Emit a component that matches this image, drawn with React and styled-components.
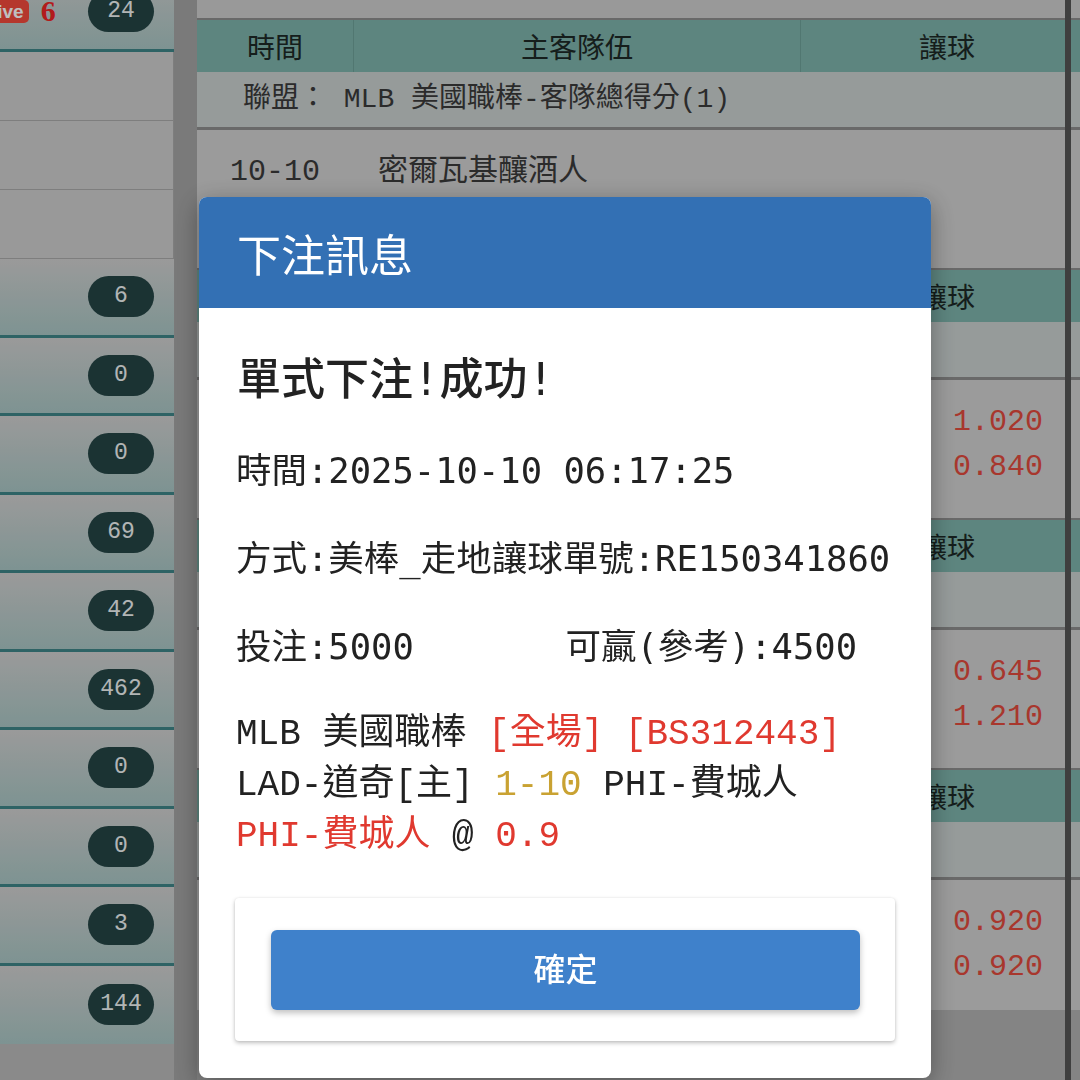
import React from "react";
import styled, { createGlobalStyle } from "styled-components";

const GlobalStyle = createGlobalStyle`
  html, body { margin: 0; padding: 0; }
  body {
    width: 1080px;
    height: 1080px;
    overflow: hidden;
    background: #a3a3a3;
    font-family: "Noto Sans CJK TC", "Noto Sans", sans-serif;
  }
`;

const Page = styled.div`
  display: flex;
  align-items: stretch;
  width: 1080px;
  height: 1080px;
  overflow: hidden;
  background: #a3a3a3;
`;

/* ---------- sidebar ---------- */
const Sidebar = styled.aside`
  flex: 0 0 174px;
  margin-top: -27px;
  background: #b8b8b8;
  display: flex;
  flex-direction: column;
`;

const TealRow = styled.div`
  box-sizing: border-box;
  height: ${(p) => p.$height}px;
  display: flex;
  align-items: center;
  padding-right: 20px;
  background: linear-gradient(#cecece, #a8c5c3);
  border-bottom: 3px solid #3e8487;
  &:last-child { border-bottom: none; }
`;

const PlainRow = styled.div`
  box-sizing: border-box;
  height: 69px;
  background: #cccccc;
  border-bottom: 1px solid #a8a8a8;
  border-right: 1px solid #a8a8a8;
`;

const LiveBadge = styled.span`
  margin-left: -13px;
  height: 23px;
  padding: 0 5px;
  border-radius: 5px;
  background: #f24a3c;
  color: #fff;
  font: 700 19px/23px "Liberation Sans", sans-serif;
`;

const LiveCount = styled.span`
  margin-left: 12px;
  color: #ee2424;
  font: 700 30px/1 "Liberation Serif", serif;
`;

const Count = styled.span`
  margin-left: auto;
  display: inline-flex;
  align-items: center;
  justify-content: center;
  width: 66px;
  height: 41px;
  border-radius: 21px;
  background: #244445;
  color: #eef2f2;
  font: 23px/1 "Liberation Mono", monospace;
`;

/* ---------- main table ---------- */
const Main = styled.main`
  position: relative;
  flex: 0 0 1000px;
  margin-left: 23px;
  background: #b0b0b0;
  display: flex;
  flex-direction: column;
`;

const TopStrip = styled.div`
  height: 18px;
  background: #cdcdcd;
`;

const HeadRow = styled.div`
  display: grid;
  grid-template-columns: 156px 447px 265px 1fr;
  height: 52px;
  border-top: 2px solid #8d8d8d;
  background: #7db2aa;
`;

const HeadCell = styled.div`
  display: flex;
  align-items: center;
  justify-content: center;
  padding-left: ${(p) => p.$shift || 0}px;
  font-size: 28px;
  color: #1c2826;
  & + & { border-left: 1px solid #6d9f97; }
`;

const LeagueRow = styled.div`
  height: 55px;
  border-bottom: 3px solid #8d8d8d;
  background: #c8cfce;
  padding-left: 46px;
  font: 28px/55px "Liberation Mono", "Noto Sans CJK TC", monospace;
  color: #3a3a3a;
  white-space: nowrap;
`;

const MatchRow = styled.div`
  box-sizing: border-box;
  display: grid;
  grid-template-columns: 156px 447px 265px 1fr;
  height: ${(p) => (p.$last ? 130 : 138)}px;
  padding-top: 20px;
  background: #cfcfcf;
  font: 30px/45px "Liberation Mono", "Noto Sans CJK TC", monospace;
  color: #3a3a3a;
`;

const TimeCell = styled.div`
  text-align: center;
`;

const TeamCell = styled.div`
  padding-left: 25px;
`;

const OddsCell = styled.div`
  display: flex;
  flex-direction: column;
  align-items: flex-end;
  padding-right: 22px;
  color: #e04a3d;
`;

const ScrollRule = styled.div`
  position: absolute;
  top: 0;
  bottom: 0;
  left: 868px;
  width: 6px;
  background: #555;
`;

/* ---------- modal ---------- */
const Backdrop = styled.div`
  position: fixed;
  inset: 0;
  background: rgba(0, 0, 0, 0.25);
`;

const Dialog = styled.div`
  position: fixed;
  left: 199px;
  top: 197px;
  width: 732px;
  background: #fff;
  border-radius: 8px;
  overflow: hidden;
  box-shadow: 0 6px 24px rgba(0, 0, 0, 0.35);
`;

const DialogHeader = styled.div`
  box-sizing: border-box;
  height: 111px;
  padding: 1px 0 0 38px;
  display: flex;
  align-items: center;
  background: #3370b4;
  color: #fff;
  font: 400 44px "Noto Sans CJK TC", sans-serif;
`;

const DialogBody = styled.div`
  padding: 43px 36px 37px 36px;
  color: #222;
  font-family: "DejaVu Sans Mono", "Noto Sans CJK TC", monospace;
`;

const Headline = styled.h2`
  margin: 0 0 0 2px;
  font-size: 44px;
  font-weight: 500;
  line-height: 58px;
`;

const Line = styled.p`
  display: flex;
  margin: 36px 0 0 1px;
  font-size: 35.5px;
  line-height: 52px;
  white-space: nowrap;
`;

const Half = styled.span`
  flex: 0 0 50%;
`;

const Slip = styled.div`
  margin: 36px 0 0 1px;
  font: 36px/51px "Liberation Mono", "Noto Sans CJK TC", monospace;
  color: #222;
  white-space: pre;
`;

const Mark = styled.span`
  color: ${(p) => (p.$tone === "gold" ? "#c9a232" : "#e0392f")};
`;

const Actions = styled.div`
  margin-top: 36px;
  padding: 32px 35px 31px 36px;
  background: #fff;
  border-radius: 4px;
  box-shadow: 0 2px 4px rgba(0, 0, 0, 0.25), 0 0 2px rgba(0, 0, 0, 0.08);
`;

const Confirm = styled.button`
  display: block;
  width: 100%;
  height: 80px;
  padding: 0 0 6px;
  border: 0;
  border-radius: 6px;
  background: #3f81cb;
  color: #fff;
  font: 500 32px "Noto Sans CJK TC", sans-serif;
  box-shadow: 0 3px 6px rgba(0, 0, 0, 0.25);
  cursor: pointer;
`;

const counts = ["6", "0", "0", "69", "42", "462", "0", "0", "3", "144"];

const blocks = [
  { time: "10-10", team: "密爾瓦基釀酒人", odds: null },
  { time: "", team: "", odds: ["1.020", "0.840"] },
  { time: "", team: "", odds: ["0.645", "1.210"] },
  { time: "", team: "", odds: ["0.920", "0.920"], last: true },
];

export default function App() {
  return (
    <>
      <GlobalStyle />
      <Page>
        <Sidebar>
          <TealRow $height={79}>
            <LiveBadge>live</LiveBadge>
            <LiveCount>6</LiveCount>
            <Count>24</Count>
          </TealRow>
          <PlainRow />
          <PlainRow />
          <PlainRow />
          {counts.map((c, i) => (
            <TealRow key={i} $height={78.5}>
              <Count>{c}</Count>
            </TealRow>
          ))}
        </Sidebar>
        <Main>
          <TopStrip />
          {blocks.map((b, i) => (
            <React.Fragment key={i}>
              <HeadRow>
                <HeadCell>時間</HeadCell>
                <HeadCell>主客隊伍</HeadCell>
                <HeadCell $shift={28}>讓球</HeadCell>
                <HeadCell />
              </HeadRow>
              <LeagueRow>聯盟： MLB 美國職棒-客隊總得分(1)</LeagueRow>
              <MatchRow $last={b.last}>
                <TimeCell>{b.time}</TimeCell>
                <TeamCell>{b.team}</TeamCell>
                <OddsCell>
                  {b.odds && b.odds.map((o, j) => <span key={j}>{o}</span>)}
                </OddsCell>
                <div />
              </MatchRow>
            </React.Fragment>
          ))}
          <ScrollRule />
        </Main>
      </Page>
      <Backdrop />
      <Dialog>
        <DialogHeader>下注訊息</DialogHeader>
        <DialogBody>
          <Headline>單式下注!成功!</Headline>
          <Line>時間:2025-10-10 06:17:25</Line>
          <Line>方式:美棒_走地讓球單號:RE150341860</Line>
          <Line>
            <Half>投注:5000</Half>
            <Half>可贏(參考):4500</Half>
          </Line>
          <Slip>
            <div>
              MLB 美國職棒 <Mark>[全場]</Mark> <Mark>[BS312443]</Mark>
            </div>
            <div>
              LAD-道奇[主] <Mark $tone="gold">1-10</Mark> PHI-費城人
            </div>
            <div>
              <Mark>PHI-費城人</Mark> @ <Mark>0.9</Mark>
            </div>
          </Slip>
          <Actions>
            <Confirm>確定</Confirm>
          </Actions>
        </DialogBody>
      </Dialog>
    </>
  );
}
